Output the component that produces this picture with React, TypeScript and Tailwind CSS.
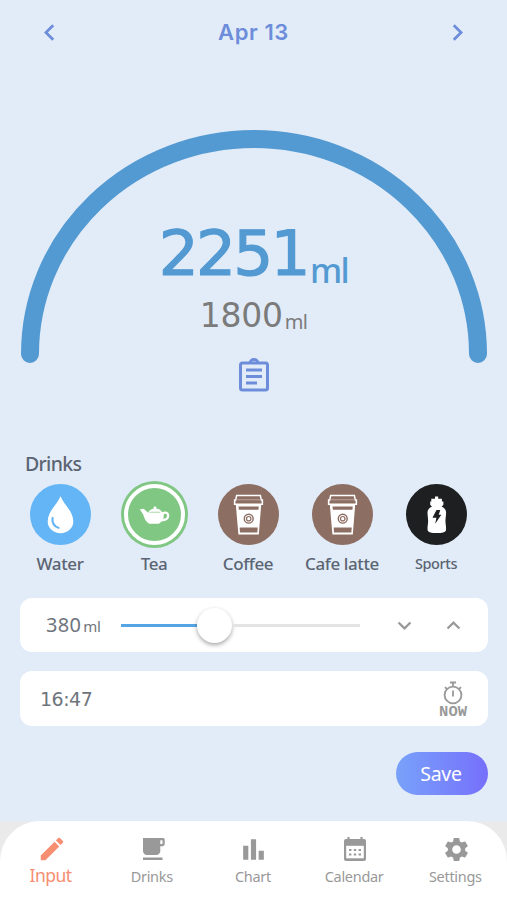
import React from "react";
import {
  MdBarChart,
  MdChevronLeft,
  MdChevronRight,
  MdCreate,
  MdExpandLess,
  MdExpandMore,
  MdSettings,
} from "react-icons/md";

const WaterIcon = () => (
  <svg viewBox="0 0 62 62" className="w-full h-full">
    <path d="M31 12.500C27.500 21 18 28 18 38a13 12 0 0 0 26 0C44 28 34.500 21 31 12.500Z" fill="white" />
    <path d="M23 34.500c-1 4.500 1.500 9 6 10" fill="none" stroke="#64b5f6" strokeWidth="2.200" strokeLinecap="round" />
  </svg>
);

const TeaIcon = () => (
  <svg viewBox="0 0.800 62 62" className="w-full h-full">
    <path
      d="M16 26.500l4-.5 4.500 4c1-2.500 4-4 6-4.200a1.400 1.400 0 1 1 2 0c3 .3 5 1.500 6.200 3.700 4-2 7.500 0 7.300 3.500-.2 4-3.500 5.500-7.500 5.600l-3 2.600H25.500c-3-2-5-5.500-6-9.500Z"
      fill="white"
    />
    <path d="M40.500 31.500c2-1 3.300 0 3.200 1.600-.1 1.900-1.500 2.900-3.700 3Z" fill="#81c784" />
    <path d="M26 29.500h11" stroke="#81c784" strokeWidth=".7" />
  </svg>
);

const CupIcon = () => (
  <svg viewBox="3.500 3 55 55" className="w-full h-full">
    <path d="M19.500 21h23l-2.200 27.500H21.900Z" fill="white" />
    <path d="M18.500 17.500h1l.8-4.200h21.400l.8 4.200h1v3.800h-25Z" fill="#8d6e63" stroke="white" strokeWidth="1.400" />
    <path d="M20 17.200h22" stroke="#b59f98" strokeWidth="1" />
    <path d="M22 23.200h18.200l-.2 3H22.300Z" fill="#8d6e63" />
    <path d="M23 42.300h16.300l-.3 4.500H23.300Z" fill="#8d6e63" />
    <circle cx="31.200" cy="34.300" r="4" fill="none" stroke="#8d6e63" strokeWidth="1.300" />
    <circle cx="31.200" cy="34.300" r="2" fill="none" stroke="#8d6e63" strokeWidth="1.100" />
  </svg>
);

const SportsIcon = () => (
  <svg viewBox="0 0 62 62" className="w-full h-full">
    <path
      d="M29.500 12.800h3.200v2.200h3.800v2.800h1.500v3.400l-1.800 2c2.600 1 4.300 2.800 4.500 5.200.2 3-.6 6-.6 9.300s1 6 .5 9.200c-.4 2.200-4 2.900-9.300 2.900s-8.900-.7-9.300-2.900c-.5-3.200.5-5.900.5-9.200s-.8-6.300-.6-9.300c.2-2.400 1.900-4.200 4.500-5.200l-1.800-2v-3.400h1.100V15h3.800Z"
      fill="white"
    />
    <path d="M31 26.500h3.800l-1.500 4.800h2.600l-6.200 9.200 1.200-6.300h-4Z" fill="#1d1f20" />
  </svg>
);

const ClipboardIcon = () => (
  <svg viewBox="0 0 32 34" className="w-8 h-[34px]" fill="none" stroke="#6d8ddb">
    <rect x="2.500" y="5" width="27" height="27" rx="2" strokeWidth="3" />
    <path d="M12 5a4 3.500 0 0 1 8 0" strokeWidth="3" />
    <path d="M8 12h16M8 18.500h16M8 25h11" strokeWidth="3" />
  </svg>
);

const StopwatchIcon = () => (
  <svg viewBox="0 0 22 24" className="w-[22px] h-6" fill="none" stroke="#999999" strokeWidth="1.800">
    <circle cx="11" cy="14" r="8.400" />
    <path d="M8 1.500h6M11 1.500v4M11 9.500v6M3 6.200l2 2M19 6.200l-2 2" />
  </svg>
);

const MugIcon = () => (
  <svg viewBox="0 0 24 24" className="w-6 h-6" fill="#999999">
    <path
      fillRule="evenodd"
      d="M2 1h20c1 0 1.700.7 1.700 1.700V7c0 1.200-1 2.200-2.200 2.200h-2.200V14c0 2.300-1.700 4-4 4H6c-2.300 0-4-1.700-4-4ZM19.300 3.200V7h2.200V3.200Z"
    />
    <path d="M2 20.500h19.500V23H2Z" />
  </svg>
);

const CalendarIcon = () => (
  <svg viewBox="0 0 24 26" className="w-6 h-[26px]">
    <path d="M5.500 1v4M18.500 1v4" stroke="#999999" strokeWidth="2.200" />
    <rect x="1" y="3" width="22" height="22" rx="2" fill="#999999" />
    <path d="M3.200 9.800h17.600v12.500H3.200Z" fill="white" />
    <path d="M6 14h12M6 18.500h12" stroke="#999999" strokeWidth="2.200" strokeDasharray="2.400 2.400" />
  </svg>
);

type DrinkProps = {
  name: string;
  icon: React.ReactNode;
  color: string;
  selected?: boolean;
  labelClass?: string;
};

const drinks: DrinkProps[] = [
  { name: "Water", icon: <WaterIcon />, color: "bg-[#64b5f6]" },
  { name: "Tea", icon: <TeaIcon />, color: "bg-[#81c784]", selected: true },
  { name: "Coffee", icon: <CupIcon />, color: "bg-[#8d6e63]" },
  { name: "Cafe latte", icon: <CupIcon />, color: "bg-[#8d6e63]" },
  { name: "Sports", icon: <SportsIcon />, color: "bg-[#1d1f20]", labelClass: "text-[14.500px]" },
];

function Drink({ name, icon, color, selected, labelClass }: DrinkProps) {
  return (
    <button className="flex w-[94px] flex-col items-center">
      <div className="flex h-[68px] items-center justify-center">
        {selected ? (
          <div className="h-[67px] w-[67px] rounded-full bg-[#81c784] p-[3px]">
            <div className={`h-full w-full rounded-full border-4 border-white ${color}`}>
              <div className="-m-1">{icon}</div>
            </div>
          </div>
        ) : (
          <div className={`h-[61px] w-[61px] rounded-full ${color}`}>{icon}</div>
        )}
      </div>
      <span
        className={`mt-1 flex h-6 items-center whitespace-nowrap font-medium tracking-[-0.400px] text-[#5b6472] ${labelClass ?? "text-[17px]"}`}
      >
        {name}
      </span>
    </button>
  );
}

const tabs = [
  { name: "Input", icon: <MdCreate size={30} />, active: true },
  { name: "Drinks", icon: <MugIcon /> },
  { name: "Chart", icon: <MdBarChart size={31} /> },
  { name: "Calendar", icon: <CalendarIcon /> },
  { name: "Settings", icon: <MdSettings size={29} /> },
];

export default function App() {
  return (
    <main className="flex h-[900px] w-[507px] flex-col overflow-hidden bg-[#e2ecf8] font-['Noto_Sans',sans-serif]">
      <header className="flex h-16 shrink-0 items-center justify-between px-[33px] text-[#6d8ddb]">
        <MdChevronLeft size={33} />
        <h1 className="font-['Inter',sans-serif] text-[22px] font-semibold tracking-[0.600px]">Apr 13</h1>
        <MdChevronRight size={33} />
      </header>

      <section className="grid h-[380px] shrink-0 grid-cols-1 grid-rows-1">
        <svg viewBox="0 0 507 380" className="col-start-1 row-start-1 h-[380px] w-[507px]">
          <path d="M30 290A224 215 0 0 1 478 290" fill="none" stroke="#5399d2" strokeWidth="18" strokeLinecap="round" />
        </svg>
        <div className="col-start-1 row-start-1 flex flex-col items-center pt-[152px]">
          <div className="flex h-[75px] items-baseline text-[#5399d2]">
            <span className="font-['DejaVu_Sans',sans-serif] text-[63px] leading-[76px] tracking-[-2.800px] [-webkit-text-stroke:1.200px_#5399d2]">
              2251
            </span>
            <span className="relative top-[8px] ml-[2px] text-[34px] font-medium leading-none tracking-[-1.500px]">ml</span>
          </div>
          <div className="flex h-[50px] items-baseline text-[#7b7b7b]">
            <span className="font-['DejaVu_Sans',sans-serif] text-[33px] leading-[50px] tracking-[-0.300px]">
              1800
            </span>
            <span className="relative top-[2px] ml-[2px] text-[20px] leading-none tracking-[-0.700px]">ml</span>
          </div>
          <div className="mt-[17px]">
            <ClipboardIcon />
          </div>
        </div>
      </section>

      <section className="h-[154px] shrink-0">
        <h2 className="ml-[25px] flex h-9 items-center pt-[3px] text-[19.500px] font-medium tracking-[-0.700px] text-[#5b6472]">
          Drinks
        </h2>
        <div className="ml-[13px] flex">
          {drinks.map((drink) => (
            <Drink key={drink.name} {...drink} />
          ))}
        </div>
      </section>

      <section className="mx-5 flex h-[54px] w-[468px] shrink-0 items-center rounded-xl bg-white">
        <div className="ml-[26px] flex w-[75px] items-baseline text-[#6f747c]">
          <span className="text-[20px] tracking-[0.300px]">380</span>
          <span className="ml-[2px] text-[15px] tracking-[-0.300px]">ml</span>
        </div>
        <div className="flex w-[239px] items-center">
          <div className="h-[3px] w-[76px] bg-[#55a5e5]" />
          <div className="h-[35px] w-[35px] shrink-0 rounded-full bg-white shadow-[0_2px_4px_rgba(0,0,0,0.35)]" />
          <div className="h-[3px] grow bg-[#e4e4e4]" />
        </div>
        <div className="ml-[31px] flex gap-[22px] text-[#999999]">
          <MdExpandMore size={27} />
          <MdExpandLess size={27} />
        </div>
      </section>

      <section className="mx-5 mt-[19px] flex h-[55px] w-[468px] shrink-0 items-center justify-between rounded-xl bg-white pl-5 pr-[21px]">
        <span className="pt-[2px] font-['DejaVu_Sans',sans-serif] text-[19px] tracking-[-0.500px] text-[#6f747c]">16:47</span>
        <div className="flex flex-col items-center pt-[2px]">
          <StopwatchIcon />
          <span className="font-['Liberation_Mono',monospace] text-[15.500px] font-bold leading-[14px] text-[#999999]">
            NOW
          </span>
        </div>
      </section>

      <button className="ml-[396px] mt-[26px] h-[43px] w-[92px] shrink-0 rounded-full bg-linear-to-r from-[#78a1fa] to-[#766ffb] pr-[2px] text-[19.500px] tracking-[-0.200px] text-white">
        Save
      </button>

      <div className="mt-auto h-[79px] shrink-0 bg-[#eaeaeb]">
        <nav className="flex h-full rounded-t-[40px] bg-white">
          {tabs.map((tab) => (
            <button
              key={tab.name}
              className={`flex w-[101.200px] flex-col items-center ${tab.active ? "text-[#f68e72]" : "text-[#999999]"}`}
            >
              <div className="ml-[2px] mt-[10px] flex h-9 items-center justify-center">{tab.icon}</div>
              <span
                className={
                  tab.active ? "-mt-1 text-[17.500px] leading-6 tracking-[-0.500px]" : "-mt-[3px] text-[14.500px] leading-6 tracking-[-0.300px]"
                }
              >
                {tab.name}
              </span>
            </button>
          ))}
        </nav>
      </div>
    </main>
  );
}
